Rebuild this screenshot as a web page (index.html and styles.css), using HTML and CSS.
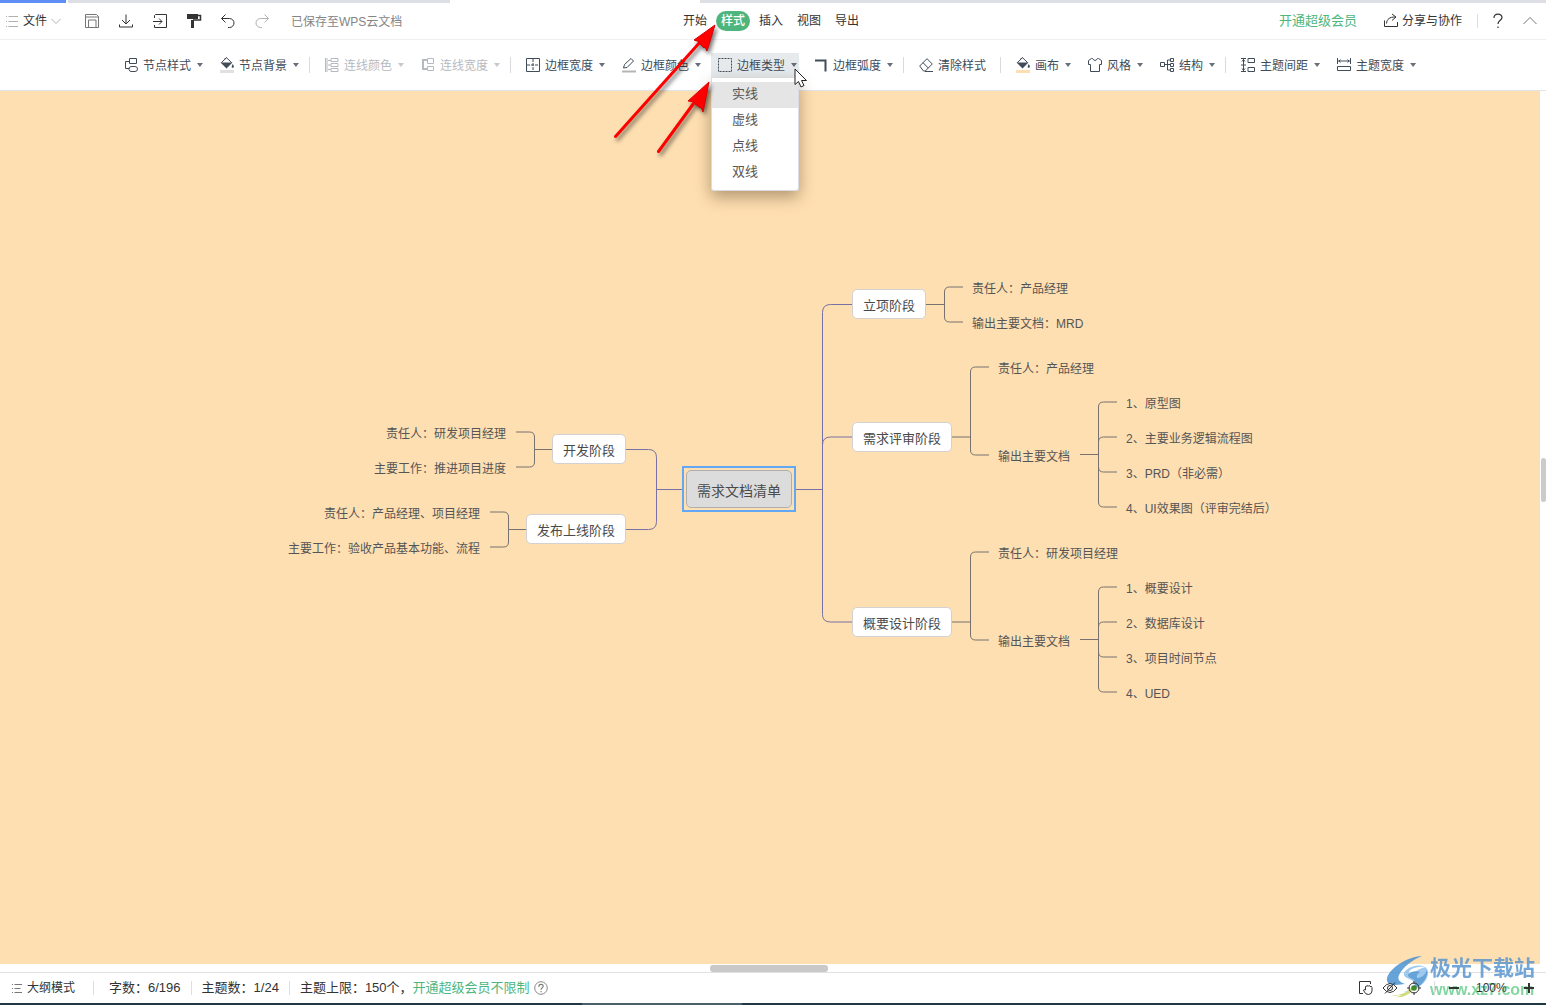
FILE: index.html
```html
<!DOCTYPE html>
<html lang="zh-CN">
<head>
<meta charset="utf-8">
<meta name="viewport" content="width=device-width, initial-scale=1">
<title>需求文档清单</title>
<link rel="stylesheet" href="styles.css">
</head>
<body>
<svg class="defs" aria-hidden="true">
  <symbol id="i-bucket" viewBox="0 0 14 16"><path d="M4 2.500 6.500.700 11.500 5.500 6.500 10.500 1.500 5.500 6.500.700"/><path class="solid" d="M.5 5.500h12L6.500 11.500Z"/><path class="solid" d="M12.700 7c1 1.500 1.600 2.500.800 3.500-.700.700-1.700.300-1.800-.600 0-1 .500-1.700 1-2.900Z"/></symbol>
</svg>

<div class="tabstrip"><span class="tab tab-active"></span><span class="tab tab-rest"></span><span class="tab-gap"></span><span class="tab tab-wide"></span></div>

<header class="topbar">
  <div class="top-left">
    <button class="file-btn" type="button">
      <svg class="ico14 faint" viewBox="0 0 14 14"><path d="M1 2.500h1M1 7.500h1M1 12.500h1M3.500 2.500h9.500M3.500 7.500h9.500M3.500 12.500h9.500"/></svg>
      <span>文件</span>
      <svg class="ico10 faint" viewBox="0 0 10 10"><path d="M.5 3 5 7.500 9.500 3"/></svg>
    </button>
    <button class="icon-btn" type="button" aria-label="保存"><svg viewBox="0 0 16 16" class="ico16 mid"><path d="M1.500 1.500h11l2 2v11h-13ZM1.500 4h13M4.500 14.500V7h7.500v7.500"/></svg></button>
    <button class="icon-btn" type="button" aria-label="下载"><svg viewBox="0 0 16 16" class="ico16"><path d="M8 1.500v9.500M4 7l4 4 4-4M1.500 11.500v2.500h13v-2.500"/></svg></button>
    <button class="icon-btn" type="button" aria-label="导出"><svg viewBox="0 0 16 16" class="ico16"><path d="M2.500 5V2.500l1-1h11v13h-12V12M1 8.500h9M7 5.500l3 3-3 3"/></svg></button>
    <button class="icon-btn" type="button" aria-label="格式刷"><svg viewBox="0 0 16 16" class="ico16"><path class="solid" d="M1 1h11v5H1Z"/><path d="M12 2.500h2.500v4.500H7" stroke-width="1.500"/><path d="M6.500 7v8" stroke-width="3"/></svg></button>
    <button class="icon-btn" type="button" aria-label="撤销"><svg viewBox="0 0 16 16" class="ico16"><path d="M5.500 1.500 1.500 5.500l4 4M1.500 5.500h8a4.500 4.500 0 0 1 0 9H8"/></svg></button>
    <button class="icon-btn" type="button" aria-label="重做" disabled><svg viewBox="0 0 16 16" class="ico16 faint"><path d="M10.500 1.500l4 4-4 4M14.500 5.500h-8a4.500 4.500 0 0 0 0 9H8"/></svg></button>
    <span class="saved">已保存至WPS云文档</span>
  </div>
  <nav class="menu-tabs">
    <button type="button">开始</button>
    <button type="button" class="current">样式</button>
    <button type="button">插入</button>
    <button type="button">视图</button>
    <button type="button">导出</button>
  </nav>
  <div class="top-right">
    <a class="vip" href="#vip">开通超级会员</a>
    <button class="share" type="button"><svg viewBox="0 0 16 16" class="ico16"><path d="M1.500 7.500v6h13V9M3.500 10.500c.500-4.500 3-6.500 8.500-6.500M9 1l4 3-4 3.500"/></svg><span>分享与协作</span></button>
    <span class="sep"></span>
    <button class="end-btn" type="button" aria-label="帮助"><svg viewBox="0 0 16 16" class="ico16"><path d="M4 5c0-5 8-5 8-.500C12 7.500 8 7 8 11M8 13.500v1.500" stroke-width="1.200"/></svg></button>
    <button class="end-btn" type="button" aria-label="收起"><svg viewBox="0 0 16 16" class="ico16 mid"><path d="M1.500 11 8 4.500l6.500 6.500"/></svg></button>
  </div>
</header>

<div class="toolbar" role="toolbar">
  <button class="tool" type="button"><svg viewBox="0 0 14 16" class="tico"><path d="M5.500 4.500h-4v7h4M5.500 1.500h7v5h-7ZM7 9.500h4a2 2 0 0 1 0 5H8a2.500 2.500 0 0 1-1-5Z"/></svg><span>节点样式</span><i class="caret"></i></button>
  <button class="tool" type="button"><svg viewBox="0 0 14 16" class="tico"><use href="#i-bucket"/><path class="grey-bar" d="M0 13h14v3H0Z"/></svg><span>节点背景</span><i class="caret"></i></button>
  <span class="tool-sep"></span>
  <button class="tool" type="button" disabled><svg viewBox="0 0 14 16" class="tico"><path d="M.5 1v14M2 1v14M3 3.500h3M3 8h3M3 12.500h3M6 1.500h7v3H6ZM6 6.500h7v3H6ZM6 11.500h7v3H6Z"/></svg><span>连线颜色</span><i class="caret"></i></button>
  <button class="tool" type="button" disabled><svg viewBox="0 0 14 16" class="tico"><path d="M6 3H2v9h4" stroke-width="2"/><path d="M6.500 1.500h6v5h-6ZM6.500 9.500h6v4h-6Z"/></svg><span>连线宽度</span><i class="caret"></i></button>
  <span class="tool-sep"></span>
  <button class="tool" type="button"><svg viewBox="0 0 14 16" class="tico"><path d="M.5 1.500h13v13H.5Z"/><path d="M7 2v4M7 10v4M1 8h4M9 8h4M5 8h4M7 6v4" stroke-dasharray="3 1"/></svg><span>边框宽度</span><i class="caret"></i></button>
  <button class="tool" type="button"><svg viewBox="0 0 14 16" class="tico"><path d="M1.500 11l1-3.500 6.500-6 2.500 2.500-6.500 6.500Z"/><path d="M0 14.500h14" class="grey-line"/></svg><span>边框颜色</span><i class="caret"></i></button>
  <div class="dropdown">
    <button class="tool tool-open" type="button" aria-expanded="true"><svg viewBox="0 0 14 16" class="tico"><path d="M.5 1.500h13v13H.5Z" stroke-dasharray="2 1"/></svg><span>边框类型</span><i class="caret"></i></button>
    <div class="dropdown-list" role="menu">
      <button type="button" role="menuitem" class="hovered">实线</button>
      <button type="button" role="menuitem">虚线</button>
      <button type="button" role="menuitem">点线</button>
      <button type="button" role="menuitem">双线</button>
    </div>
  </div>
  <button class="tool" type="button"><svg viewBox="0 0 14 16" class="tico"><path d="M1 3.500h10.500v11" stroke-width="2"/></svg><span>边框弧度</span><i class="caret"></i></button>
  <span class="tool-sep"></span>
  <button class="tool tool-plain" type="button"><svg viewBox="0 0 14 16" class="tico"><path d="M.7 9 8 1.700 13.300 7l-7 7H4.500ZM4 5.700 9.300 11M6 14.500h8"/></svg><span>清除样式</span></button>
  <span class="tool-sep"></span>
  <button class="tool" type="button"><svg viewBox="0 0 14 16" class="tico"><use href="#i-bucket"/><path class="peach-bar" d="M0 13h14v3H0Z"/></svg><span>画布</span><i class="caret"></i></button>
  <button class="tool" type="button"><svg viewBox="0 0 14 16" class="tico"><path d="M3.500 1.500h1q2.500 4 5 0h1l3 2v4h-2v7h-9v-7h-2v-4Z"/></svg><span>风格</span><i class="caret"></i></button>
  <button class="tool" type="button"><svg viewBox="0 0 14 16" class="tico"><path d="M.5 5.500h4v4h-4ZM4.500 7.500h6M10.500 3h-3v10h3M13.500 1.500h-3v3h3ZM13.500 6.500h-3v3h3ZM13.500 11.500h-3v3h3Z"/></svg><span>结构</span><i class="caret"></i></button>
  <span class="tool-sep"></span>
  <button class="tool" type="button"><svg viewBox="0 0 14 16" class="tico"><path d="M0 1.500h5M0 14.500h5M2.500 2v12M1 4.500l1.500-2 1.500 2M1 11.500l1.500 2 1.500-2M0 8h5M7 1.500h6.500v4H7ZM7 10.500h6.500v4H7Z"/></svg><span>主题间距</span><i class="caret"></i></button>
  <button class="tool" type="button"><svg viewBox="0 0 14 16" class="tico"><path d="M.5 1v6M13.500 1v6M1 4h12M3.500 2.500 2 4l1.500 1.500M10.500 2.500 12 4l-1.500 1.500M.5 9.500h13v4H.5Z"/></svg><span>主题宽度</span><i class="caret"></i></button>

  <svg class="pointer-arrows" viewBox="0 0 120 140" aria-hidden="true">
    <g class="arrow"><path d="M11.500 113.500 97 18" class="shaft"/><path d="M111 2 90 17l6 2-1 1 5 5 1-1 2 4Z"/></g>
    <g class="arrow"><path d="M54.500 128.500 95 73" class="shaft"/><path d="M105 59 84 78l7 1-1 1 6 5 1-1 2 5Z"/></g>
  </svg>
  <svg class="cursor" viewBox="0 0 13 20" aria-hidden="true"><path d="M1 1v15.500l3.500-3 2.500 5.500 3-1.500-2.500-5h5Z"/></svg>
</div>

<main class="stage">
  <div class="canvas">
    <div class="map">
      <svg class="links" viewBox="0 0 1020 440" aria-hidden="true">
        <g class="main-links">
          <path d="M536 218.500h26.500M592 33.500h-21.500q-8 0-8 8V343.500q0 7.500 8 7.500H592M592 166h-21.500q-8 0-8 8"/>
          <path d="M422 218.500h-25.500M366 178.500h22.500q8 0 8 8v64q0 8-8 8H366"/>
        </g>
        <g class="sub-links">
          <path d="M666 33.500h18.500M703 16h-13.500q-5 0-5 5v25q0 5 5 5H703"/>
          <path d="M692 166h18.500M729 96h-13.500q-5 0-5 5v78q0 5 5 5H729"/>
          <path d="M820 183.500h18.500M857 131h-13.500q-5 0-5 5v95q0 5 5 5H857M857 166h-13.500q-5 0-5 5M857 201h-13.500q-5 0-5-5"/>
          <path d="M692 351h18.500M729 281h-13.500q-5 0-5 5v78q0 5 5 5H729"/>
          <path d="M820 368.500h18.500M857 316h-13.500q-5 0-5 5v95q0 5 5 5H857M857 351h-13.500q-5 0-5 5M857 386h-13.500q-5 0-5-5"/>
          <path d="M292 178.500h-17.500M256 161h13.500q5 0 5 5v25q0 5-5 5H256"/>
          <path d="M266 258.500h-17.500M230 241h13.500q5 0 5 5v25q0 5-5 5H230"/>
        </g>
      </svg>
      <div class="selection"><div class="root">需求文档清单</div></div>
      <div class="node n-start">立项阶段</div>
      <div class="node n-review">需求评审阶段</div>
      <div class="node n-design">概要设计阶段</div>
      <div class="node n-dev">开发阶段</div>
      <div class="node n-release">发布上线阶段</div>

      <ul class="leaves l-start"><li>责任人：产品经理</li><li>输出主要文档：MRD</li></ul>
      <div class="leaf review-owner">责任人：产品经理</div>
      <div class="leaf review-docs">输出主要文档</div>
      <ul class="leaves l-review"><li>1、原型图</li><li>2、主要业务逻辑流程图</li><li>3、PRD（非必需）</li><li>4、UI效果图（评审完结后）</li></ul>
      <div class="leaf design-owner">责任人：研发项目经理</div>
      <div class="leaf design-docs">输出主要文档</div>
      <ul class="leaves l-design"><li>1、概要设计</li><li>2、数据库设计</li><li>3、项目时间节点</li><li>4、UED</li></ul>
      <ul class="leaves l-dev"><li>责任人：研发项目经理</li><li>主要工作：推进项目进度</li></ul>
      <ul class="leaves l-release"><li>责任人：产品经理、项目经理</li><li>主要工作：验收产品基本功能、流程</li></ul>
    </div>
  </div>
  <div class="vscroll"><span class="vthumb"></span></div>
  <div class="hscroll"><span class="hthumb"></span></div>
</main>

<footer class="statusbar">
  <button class="outline-btn" type="button"><svg class="ico10 mid" viewBox="0 0 10 10"><path d="M0 1.500h1M0 5.500h1M0 9.500h1M2.500 1.500H10M2.500 5.500h6M2.500 9.500H10"/></svg><span>大纲模式</span></button>
  <span class="sep"></span>
  <span class="stat stat-first">字数：6/196</span>
  <span class="sep"></span>
  <span class="stat">主题数：1/24</span>
  <span class="sep"></span>
  <span class="stat">主题上限：150个，<a class="vip" href="#vip">开通超级会员不限制</a></span>
  <button class="help" type="button" aria-label="说明"><svg viewBox="0 0 16 16" class="ico14 mid"><circle cx="8" cy="8" r="7.200"/><path d="M5.500 6.500c0-3.500 5-3.500 5-.500C10.500 8 8 7.800 8 10M8 11.300v1.500" stroke-width="1.300"/></svg></button>
  <div class="view-tools">
    <button type="button" aria-label="拖动"><svg viewBox="0 0 16 16" class="ico16"><path d="M5 13.500H1.500v-12h11V4"/><path d="M7.500 10V6.500q1-1 1.500 0V6q1-1 1.500 0q1-1 1.500 0v.500q2-.500 2 1V11q-.500 3.500-3.500 3.500T6.500 12L5.500 10q.500-1 2 0"/></svg></button>
    <button type="button" aria-label="隐藏"><svg viewBox="0 0 16 16" class="ico16"><path d="M1 8q7-9 14 0-7 9-14 0ZM13 2.500 3 13.500"/><circle cx="8" cy="8" r="2.500"/></svg></button>
    <button type="button" aria-label="居中"><svg viewBox="0 0 16 16" class="ico16"><circle cx="8" cy="8" r="5"/><circle cx="8" cy="8" r="2.800" class="target-dot"/><path d="M8 1v3M8 12v3M1 8h3M12 8h3"/></svg></button>
    <span class="sep"></span>
    <button type="button" class="zoom-out" aria-label="缩小"><svg viewBox="0 0 10 10" class="ico10"><path d="M0 5h10" stroke-width="2"/></svg></button>
    <span class="zoom">100%</span>
    <button type="button" class="zoom-in" aria-label="放大"><svg viewBox="0 0 10 10" class="ico10"><path d="M0 5h10M5 0v10" stroke-width="2"/></svg></button>
  </div>
</footer>
<div class="desktop-strip"><span class="strip-light"></span></div>

<div class="watermark">
  <svg viewBox="0 0 44 46" aria-hidden="true">
    <path class="wm-blue" d="M36 1C20 2 4 13 1 23c-1 5 3 7 9 7l9-1c-5-2-8-4-6-9C17 12 26 5 36 1Z"/>
    <path class="wm-sky" d="M39 12c-8-4-19 1-21 6-1 5 5 5 9 8 4 4 0 8-9 11 12-1 23-9 24-18 0-3-1-6-3-7-2 1-8 2-10 6-1 2 4 3 3 6-2-5-10-3-9-7 1-3 8-6 16-5Z"/>
    <path class="wm-blue" d="M41 14c2 8-5 18-18 22 6-4 8-8 5-11-2-2-6-2-6-5 1-3 8-5 12-3-3 2-4 4-2 6 5-1 8-4 9-9Z"/>
    <path class="wm-gold" d="M4 40c9 1 17-2 22-8 2 0 3 1 2 2-5 6-12 9-18 8 2 0 4-1 5-2-4 1-8 1-11 0Z"/>
  </svg>
  <div class="wm-text"><span class="wm-name">极光下载站</span><span class="wm-url">www.xz7.com</span></div>
</div>
</body>
</html>
```
FILE: styles.css
```css
* { box-sizing: border-box; }

html, body { height: 100%; }

body {
  margin: 0;
  display: flex;
  flex-direction: column;
  position: relative;
  overflow: hidden;
  background: #fff;
  color: #333;
  font-family: "Liberation Sans", "Noto Sans CJK SC", sans-serif;
  font-size: 12px;
  line-height: 20px;
}

button {
  margin: 0;
  padding: 0;
  border: 0;
  background: none;
  color: inherit;
  font: inherit;
  display: flex;
  align-items: center;
  white-space: nowrap;
}

a { text-decoration: none; }

svg { fill: none; stroke: currentColor; flex: none; display: block; }
.defs { position: absolute; width: 0; height: 0; }
.solid { fill: currentColor; stroke: none; }
.ico10 { width: 10px; height: 10px; }
.ico14 { width: 14px; height: 14px; }
.ico16 { width: 16px; height: 16px; }
.mid { color: #777; }
.faint { color: #b0b0b0; }
.sep { width: 1px; height: 14px; background: #dedede; flex: none; }
.vip { color: #4eb67c; font-size: 13px; }

/* Window tabs */
.tabstrip { display: flex; height: 3px; flex: none; }
.tab { background: #dedfe4; }
.tab-active { width: 66px; background: #5e8df5; margin-right: 2px; }
.tab-rest { width: 382px; }
.tab-gap { width: 250px; }
.tab-wide { flex: 1; }

/* Title row */
.topbar {
  display: grid;
  grid-template-columns: 1fr auto 1fr;
  align-items: center;
  height: 37px;
  flex: none;
  border-bottom: 1px solid #f0f0f0;
}
.top-left, .top-right, .menu-tabs { display: flex; align-items: center; }
.file-btn { width: 75px; padding-left: 5px; gap: 4px; }
.icon-btn { width: 34px; height: 28px; justify-content: center; }
.saved { margin-left: 12px; padding-top: 2px; color: #858585; white-space: nowrap; }
.menu-tabs { gap: 4px; margin-right: 4px; }
.menu-tabs button { height: 20px; padding: 0 5px; border-radius: 10px; }
.menu-tabs .current { background: #4eb67c; color: #fff; font-weight: 500; }
.top-right { justify-content: flex-end; }
.share { gap: 3px; margin: 0 15px 0 26px; }
.end-btn { width: 32px; justify-content: center; }
.top-right .sep { margin-right: 4px; }

/* Tool row */
.toolbar {
  position: relative;
  z-index: 2;
  display: flex;
  justify-content: center;
  align-items: center;
  gap: 8px;
  height: 51px;
  flex: none;
  padding-right: 11px;
  border-bottom: 1px solid #e3e3e3;
  color: #414c59;
}
.tool { height: 25px; padding: 0 2px 0 7px; flex: none; }
.tool span { padding-top: 2px; }
.tool-plain { padding-right: 6px; }
.tool:disabled { color: #b6bac0; }
.tool-open { background: #e6eaed; }
.tico { width: 14px; height: 16px; margin-right: 5px; }
.caret {
  width: 6px;
  height: 4px;
  margin-left: 6px;
  background: currentColor;
  opacity: 0.8;
  clip-path: polygon(0 0, 100% 0, 50% 100%);
}
.tool-sep { width: 1px; height: 16px; background: #d8dadd; flex: none; }
.grey-bar { fill: #e1e1e1; stroke: none; }
.peach-bar { fill: #fddfb2; stroke: none; }
.grey-line { stroke: #b5b5b5; stroke-width: 2; }

.dropdown { position: relative; flex: none; }
.dropdown-list {
  position: absolute;
  top: 100%;
  left: 0;
  right: 0;
  padding: 4px 0;
  background: #fff;
  border: 1px solid #d9dce0;
  border-top: 0;
  border-radius: 0 0 3px 3px;
  box-shadow: 0 6px 16px rgba(60, 40, 10, 0.4);
}
.dropdown-list button {
  width: 100%;
  height: 26px;
  padding: 0 0 2px 20px;
  font-size: 13px;
  color: #555;
}
.dropdown-list .hovered { background: #e5e5e5; }

/* Callout arrows and mouse pointer over the tool row */
.pointer-arrows {
  position: absolute;
  left: calc(50% - 169px);
  top: -17px;
  width: 120px;
  height: 140px;
  overflow: visible;
  pointer-events: none;
  filter: drop-shadow(2px 3px 2px rgba(0, 0, 0, 0.55));
}
.arrow { fill: #f00; stroke: #d00; stroke-width: 1; }
.shaft { stroke: #f00; stroke-width: 3; stroke-linecap: round; }
.cursor {
  position: absolute;
  left: calc(50% + 21px);
  top: 28px;
  width: 13px;
  height: 20px;
  fill: #fff;
  stroke: #222;
  pointer-events: none;
}

/* Canvas with scroll bars */
.stage {
  display: grid;
  grid-template: minmax(0, 1fr) 8px / minmax(0, 1fr) 6px;
  flex: 1;
  min-height: 0;
}
.canvas { background: #fedfb2; overflow: hidden; padding-top: 180px; display: flex; justify-content: center; }
.vscroll { display: flex; align-items: center; }
.vthumb { width: 5px; height: 44px; margin: 0 0 96px 1px; border-radius: 3px; background: #cbcbcb; }
.hscroll { display: flex; justify-content: center; }
.hthumb { width: 118px; height: 7px; margin-top: 1px; margin-right: 2px; border-radius: 3px; background: #c9c9c9; }

/* Mind map: nodes sit freely on the canvas */
.map { position: relative; width: 1020px; height: 440px; flex: none; color: #555; }
.links { position: absolute; inset: 0; width: 1020px; height: 440px; }
.main-links { stroke: #7871a3; }
.sub-links { stroke: #77716f; }
.node {
  position: absolute;
  height: 30px;
  padding: 1px 10px 0;
  border: 1px solid #d3d1d1;
  border-radius: 5px;
  background: #fff;
  font-size: 13px;
  line-height: 30px;
  color: #4a4a4a;
  white-space: nowrap;
}
.selection {
  position: absolute;
  left: 422px;
  top: 195px;
  padding: 2px;
  border: 2px solid #62a8f5;
}
.root {
  height: 38px;
  padding: 1px 10px 0;
  border: 1px solid #b1aeae;
  border-radius: 5px;
  background: #dcdcdc;
  font-size: 14px;
  line-height: 38px;
  color: #4a4a4a;
  white-space: nowrap;
}
.n-start { left: 592px; top: 18px; }
.n-review { left: 592px; top: 151px; }
.n-design { left: 592px; top: 336px; }
.n-dev { left: 292px; top: 163px; }
.n-release { left: 266px; top: 243px; }

.leaf, .leaves { position: absolute; white-space: nowrap; }
.leaves { margin: 0; padding: 0; list-style: none; display: grid; gap: 15px; }
.l-start { left: 712px; top: 8px; }
.review-owner { left: 738px; top: 88px; }
.review-docs { left: 738px; top: 176px; }
.l-review { left: 866px; top: 123px; }
.design-owner { left: 738px; top: 273px; }
.design-docs { left: 738px; top: 361px; }
.l-design { left: 866px; top: 308px; }
.l-dev { right: 774px; top: 153px; text-align: right; }
.l-release { right: 800px; top: 233px; text-align: right; }

/* Status row */
.statusbar {
  display: flex;
  align-items: center;
  height: 31px;
  flex: none;
  border-top: 1px solid #e1e1e1;
  color: #333;
}
.outline-btn { padding: 0 18px 0 12px; gap: 5px; }
.stat { padding: 0 10px; font-size: 13px; white-space: nowrap; }
.stat-first { padding-left: 15px; }
.help { margin-left: -6px; }
.view-tools {
  position: relative;
  z-index: 4;
  display: flex;
  align-items: center;
  gap: 8px;
  margin-left: auto;
  padding-right: 12px;
}
.view-tools .sep { margin-left: 4px; }
.target-dot { fill: #3d8a2c; stroke: none; }
.zoom { margin: 0 9px; width: 31px; }
.zoom-out { margin-left: 6px; }
.desktop-strip { display: flex; justify-content: center; height: 2px; flex: none; background: #203843; }
.strip-light { width: 160px; margin-right: 222px; background: #4a6069; }

/* Site mark laid over the corner */
.watermark {
  position: absolute;
  right: 11px;
  bottom: 4px;
  z-index: 3;
  display: flex;
  align-items: center;
  opacity: 0.85;
  pointer-events: none;
}
.watermark svg { width: 44px; height: 46px; stroke: none; }
.wm-blue { fill: #4b93d2; }
.wm-sky { fill: #8fc0ea; }
.wm-gold { fill: #c9d56a; }
.wm-text { display: grid; }
.wm-name { font-size: 21px; line-height: 24px; font-weight: 700; color: #5b97cf; }
.wm-url { font-size: 16px; line-height: 20px; font-weight: 700; color: #6dd092; }
```
